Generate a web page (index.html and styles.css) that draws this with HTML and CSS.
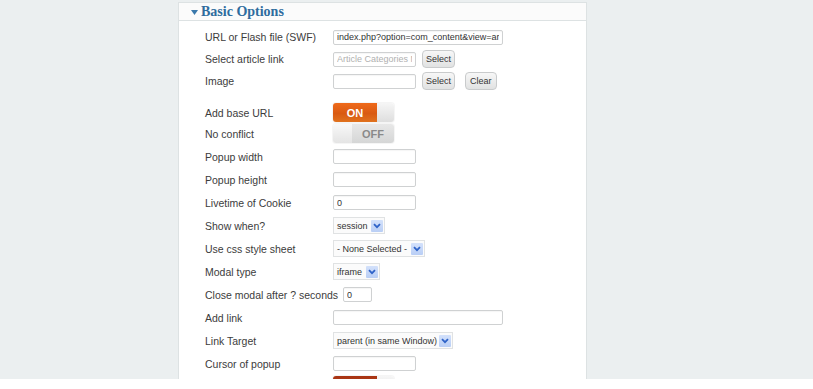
FILE: index.html
```html
<!DOCTYPE html>
<html>
<head>
<meta charset="utf-8">
<link rel="stylesheet" href="styles.css">
</head>
<body>
<div class="page">
  <div class="panel">
    <div class="panel-head">
      <svg class="caret" width="7" height="5" viewBox="0 0 7 5"><path d="M0 0H7L3.5 5Z" fill="#3a78ab"/></svg>
      <span class="title">Basic Options</span>
    </div>
    <div class="panel-body">
      <div class="row h22"><span class="label">URL or Flash file (SWF)</span><div class="field"><input class="input w170" value="index.php?option=com_content&amp;view=article&amp;id=1" readonly></div></div>
      <div class="row h22"><span class="label">Select article link</span><div class="field"><input class="input w83 ph" value="Article Categories Module" readonly><button class="btn">Select</button></div></div>
      <div class="row h22"><span class="label">Image</span><div class="field"><input class="input w83" value="" readonly><button class="btn">Select</button><button class="btn gap">Clear</button></div></div>
      <div class="spacer"></div>
      <div class="row h21"><span class="label">Add base URL</span><div class="field"><div class="toggle"><span class="seg on">ON</span><span class="knob"></span></div></div></div>
      <div class="row h21"><span class="label">No conflict</span><div class="field"><div class="toggle"><span class="knob left"></span><span class="seg off">OFF</span></div></div></div>
      <div class="row h23 first23"><span class="label">Popup width</span><div class="field"><input class="input w83" value="" readonly></div></div>
      <div class="row h23"><span class="label">Popup height</span><div class="field"><input class="input w83" value="" readonly></div></div>
      <div class="row h23"><span class="label">Livetime of Cookie</span><div class="field"><input class="input w83" value="0" readonly></div></div>
      <div class="row h23"><span class="label">Show when?</span><div class="field"><div class="select w52"><span class="sel-text">session</span><span class="arrow"><svg width="8" height="6" viewBox="0 0 8 6"><path d="M1 1.2L4 4.2L7 1.2" fill="none" stroke="#2f63c8" stroke-width="1.8"/></svg></span></div></div></div>
      <div class="row h23"><span class="label">Use css style sheet</span><div class="field"><div class="select w92"><span class="sel-text">- None Selected -</span><span class="arrow"><svg width="8" height="6" viewBox="0 0 8 6"><path d="M1 1.2L4 4.2L7 1.2" fill="none" stroke="#2f63c8" stroke-width="1.8"/></svg></span></div></div></div>
      <div class="row h23"><span class="label">Modal type</span><div class="field"><div class="select w47"><span class="sel-text">iframe</span><span class="arrow"><svg width="8" height="6" viewBox="0 0 8 6"><path d="M1 1.2L4 4.2L7 1.2" fill="none" stroke="#2f63c8" stroke-width="1.8"/></svg></span></div></div></div>
      <div class="row-inline h23"><span class="label">Close modal after ? seconds</span><input class="input w29" value="0" readonly></div>
      <div class="row h23"><span class="label">Add link</span><div class="field"><input class="input w170" value="" readonly></div></div>
      <div class="row h23"><span class="label">Link Target</span><div class="field"><div class="select w120"><span class="sel-text">parent (in same Window)</span><span class="arrow"><svg width="8" height="6" viewBox="0 0 8 6"><path d="M1 1.2L4 4.2L7 1.2" fill="none" stroke="#2f63c8" stroke-width="1.8"/></svg></span></div></div></div>
      <div class="row h23"><span class="label">Cursor of popup</span><div class="field"><input class="input w83" value="" readonly></div></div>
      <div class="row h21"><span class="label"></span><div class="field top"><div class="toggle"><span class="seg on dark"></span><span class="knob"></span></div></div></div>
    </div>
  </div>
</div>
</body>
</html>
```
FILE: styles.css
```css
html, body {
  margin: 0;
  padding: 0;
  background: #ffffff;
}
body {
  font-family: "Liberation Sans", Arial, sans-serif;
  color: #3a3a3a;
}
.page {
  height: 379px;
  box-sizing: border-box;
  background: #ebeff0;
  padding: 2px 0 0 178px;
  overflow: hidden;
}
.panel {
  width: 409px;
  box-sizing: border-box;
  height: 400px;
  background: #ffffff;
  border: 1px solid #dde2e3;
}
.panel-head {
  height: 17px;
  border-bottom: 1px solid #dde2e3;
  background: #fbfbfb;
  display: flex;
  align-items: center;
  padding-left: 12px;
}
.caret {
  margin-right: 3px;
  margin-top: 1px;
}
.title {
  font-family: "Liberation Serif", "Times New Roman", serif;
  font-weight: bold;
  font-size: 14px;
  color: #2e6c9e;
}
.panel-body {
  padding: 5px 0 0 26px;
}
.row {
  display: grid;
  grid-template-columns: 128px auto;
  align-items: center;
}
.row-inline {
  display: flex;
  align-items: center;
  gap: 5px;
}
.h21 { height: 21px; }
.h22 { height: 22px; }
.h23 { height: 23px; }
.first23 { margin-top: 1px; }
.spacer { height: 10px; }
.label {
  font-size: 10.5px;
  color: #3c3c3c;
}
.field {
  display: flex;
  align-items: center;
}
.field.top {
  align-self: start;
  padding-top: 1px;
}
.input {
  box-sizing: border-box;
  height: 15px;
  padding: 0 3px;
  margin: 0;
  border: 1px solid #cfd1d2;
  border-radius: 2px;
  background: #ffffff;
  font-family: "Liberation Sans", Arial, sans-serif;
  font-size: 9px;
  color: #333333;
  outline: none;
  box-shadow: inset 0 1px 1px rgba(0,0,0,0.04);
}
.input.ph { color: #b0b0b0; }
.w170 { width: 170px; }
.w83 { width: 83px; }
.w29 { width: 29px; }
.btn {
  margin: 0 0 0 6px;
  height: 18px;
  padding: 0 3px;
  border: 1px solid #c9cbcc;
  border-radius: 4px;
  background: linear-gradient(#f7f7f7, #e1e2e2);
  font-family: "Liberation Sans", Arial, sans-serif;
  font-size: 9px;
  color: #333333;
}
.btn.gap { margin-left: 10px; padding: 0 4px; }
.toggle {
  display: flex;
  width: 61px;
  height: 19px;
  border-radius: 3px;
  overflow: hidden;
  box-shadow: 0 0 0 1px rgba(0,0,0,0.04);
}
.seg {
  display: flex;
  align-items: center;
  justify-content: center;
  font-size: 11px;
  font-weight: bold;
}
.seg.on {
  width: 44px;
  color: #ffffff;
  background: linear-gradient(#ef6a1a, #d95a12 55%, #e0721e);
}
.seg.on.dark {
  background: linear-gradient(#a83414, #c04618);
}
.seg.off {
  width: 42px;
  color: #8a8a8a;
  background: linear-gradient(#e8e8e8, #d5d6d6);
}
.knob {
  width: 17px;
  background: linear-gradient(#f6f6f6, #dedede);
}
.knob.left {
  width: 19px;
  background: linear-gradient(#f8f8f8, #e4e4e4);
}
.select {
  box-sizing: border-box;
  height: 17px;
  display: flex;
  align-items: center;
  justify-content: space-between;
  border: 1px solid #e0e2e3;
  background: #fbfbfb;
  padding: 0 1px 0 3px;
  font-size: 9px;
  color: #333333;
  white-space: nowrap;
}
.w52 { width: 52px; }
.w92 { width: 92px; }
.w47 { width: 47px; }
.w120 { width: 120px; }
.arrow {
  width: 12px;
  height: 12px;
  background: linear-gradient(#d3e1fb, #b9cef5);
  border-radius: 1px;
  display: flex;
  align-items: center;
  justify-content: center;
}
```
